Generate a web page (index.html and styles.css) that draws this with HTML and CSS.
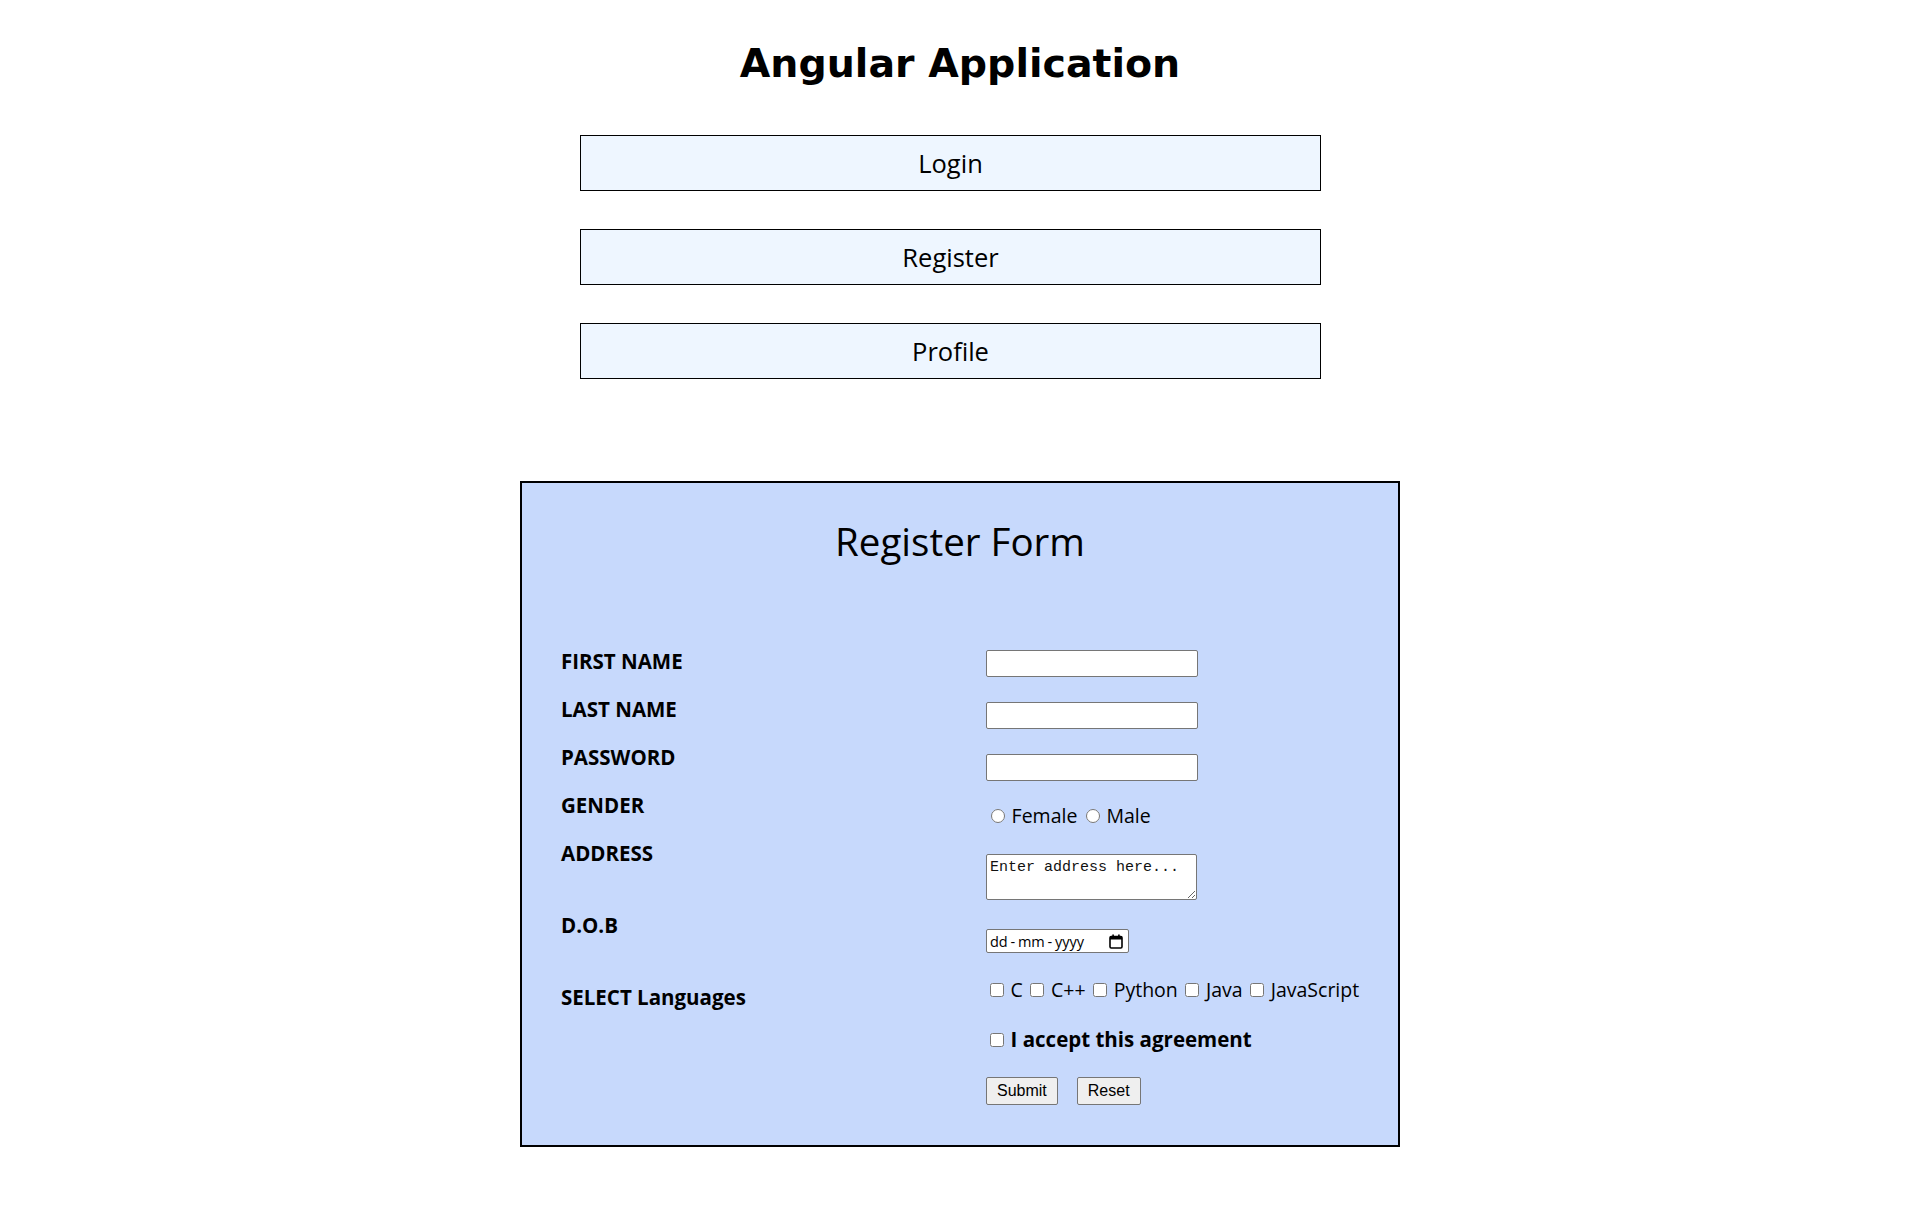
FILE: index.html
```html
<!DOCTYPE html>
<html lang="en">
<head>
<meta charset="utf-8">
<title>Angular Application</title>
<link rel="stylesheet" href="styles.css">
</head>
<body>
  <h1 class="app-title">Angular Application</h1>

  <nav class="nav">
    <button class="nav-btn" type="button">Login</button>
    <button class="nav-btn" type="button">Register</button>
    <button class="nav-btn" type="button">Profile</button>
  </nav>

  <section class="card">
    <h2 class="card-title">Register Form</h2>
    <form class="form">
      <div class="labels">
        <div class="label">FIRST NAME</div>
        <div class="label">LAST NAME</div>
        <div class="label">PASSWORD</div>
        <div class="label">GENDER</div>
        <div class="label">ADDRESS</div>
        <div class="label label-dob">D.O.B</div>
        <div class="label label-lang">SELECT Languages</div>
      </div>
      <div class="fields">
        <input class="text-input" type="text">
        <input class="text-input" type="text">
        <input class="text-input" type="password">
        <div class="choice-row radio-row"><input class="tick" type="radio" name="g"> Female <input class="tick" type="radio" name="g"> Male</div>
        <textarea class="address" placeholder="Enter address here..."></textarea>
        <div class="date-field">
          <input class="date-input" type="text" placeholder="dd - mm - yyyy">
          <svg class="cal-icon" width="14" height="15" viewBox="0 0 14 15" aria-hidden="true">
            <rect x="1" y="2.5" width="12" height="11.5" rx="1.2" fill="none" stroke="#000" stroke-width="1.6"/>
            <rect x="1" y="2.5" width="12" height="3" fill="#000"/>
            <rect x="3.3" y="0.5" width="1.6" height="3" fill="#000"/>
            <rect x="9.1" y="0.5" width="1.6" height="3" fill="#000"/>
          </svg>
        </div>
        <div class="choice-row lang-row"><input class="tick" type="checkbox"> C <input class="tick" type="checkbox"> C++ <input class="tick" type="checkbox"> Python <input class="tick" type="checkbox"> Java <input class="tick" type="checkbox"> JavaScript</div>
        <div class="choice-row agree-row"><input class="tick" type="checkbox"> <b>I accept this agreement</b></div>
        <div class="actions">
          <button class="form-btn" type="submit">Submit</button>
          <button class="form-btn" type="reset">Reset</button>
        </div>
      </div>
    </form>
  </section>
</body>
</html>
```

FILE: styles.css
```css
html, body {
  margin: 0;
  padding: 0;
  background: #ffffff;
  color: #000000;
  font-family: "Open Sans", "Noto Sans", sans-serif;
}

.app-title {
  margin: 39px 0 0;
  text-align: center;
  font-family: "DejaVu Sans", sans-serif;
  font-weight: bold;
  font-size: 39.5px;
  line-height: 48px;
}

.nav {
  display: flex;
  flex-direction: column;
  align-items: center;
  gap: 38px;
  margin-top: 48px;
  padding-right: 19px;
}

.nav-btn {
  width: 741px;
  height: 56px;
  margin: 0;
  padding: 0;
  box-sizing: border-box;
  background: #eef6ff;
  border: 1px solid #000000;
  border-radius: 0;
  font-family: "Open Sans", "Noto Sans", sans-serif;
  font-size: 25.5px;
  color: #000000;
}

.card {
  width: 880px;
  box-sizing: border-box;
  margin: 102px auto 0;
  padding: 32px 0 40px;
  background: #c7d9fc;
  border: 2px solid #000000;
}

.card-title {
  margin: 0;
  text-align: center;
  font-weight: normal;
  font-size: 38.5px;
  line-height: 53px;
}

.form {
  display: grid;
  grid-template-columns: 425px 1fr;
  margin-top: 79px;
  padding-left: 39px;
}

.labels {
  display: flex;
  flex-direction: column;
  gap: 20px;
}

.label {
  font-weight: bold;
  font-size: 20.5px;
  line-height: 28px;
  white-space: nowrap;
}

.label-dob {
  margin-top: 24px;
}

.label-lang {
  margin-top: 24px;
}

.fields {
  display: flex;
  flex-direction: column;
  align-items: flex-start;
}

.text-input {
  width: 212px;
  height: 27px;
  box-sizing: border-box;
  margin: 3px 0 25px;
  border: 1px solid #767676;
  border-radius: 2px;
  background: #ffffff;
}

.text-input + .text-input {
  margin-top: 0;
}

.choice-row {
  font-size: 19.5px;
  line-height: 20px;
  white-space: nowrap;
  word-spacing: -1.5px;
}

.tick {
  width: 14px;
  height: 14px;
}

.radio-row {
  margin-top: 0;
}

.address {
  display: block;
  width: 211px;
  height: 46px;
  box-sizing: border-box;
  margin: 28px 0 0;
  padding: 4px 3px 2px;
  border: 1px solid #767676;
  border-radius: 2px;
  font-family: "Liberation Mono", "DejaVu Sans Mono", monospace;
  font-size: 15px;
  line-height: 17px;
  resize: vertical;
}

.address::placeholder {
  color: #111111;
}

.date-field {
  position: relative;
  width: 143px;
  height: 24px;
  margin-top: 29px;
}

.date-input {
  display: block;
  width: 143px;
  height: 24px;
  box-sizing: border-box;
  margin: 0;
  padding: 0 3px;
  border: 1px solid #767676;
  border-radius: 2px;
  background: #ffffff;
  font-family: "Open Sans", "Noto Sans", sans-serif;
  font-size: 14.5px;
  word-spacing: -1px;
}

.date-input::placeholder {
  color: #000000;
}

.cal-icon {
  position: absolute;
  top: 5px;
  right: 6px;
}

.lang-row {
  margin-top: 27px;
}

.agree-row {
  margin-top: 29px;
}

.agree-row b {
  font-weight: bold;
  font-size: 20.5px;
  word-spacing: 0;
}

.actions {
  display: flex;
  gap: 19px;
  margin-top: 27px;
}

.form-btn {
  height: 28px;
  box-sizing: border-box;
  margin: 0;
  padding: 0 10px;
  border: 1px solid #767676;
  border-radius: 2px;
  background: #efefef;
  font-family: "Liberation Sans", Arial, sans-serif;
  font-size: 16px;
  color: #000000;
}
```
